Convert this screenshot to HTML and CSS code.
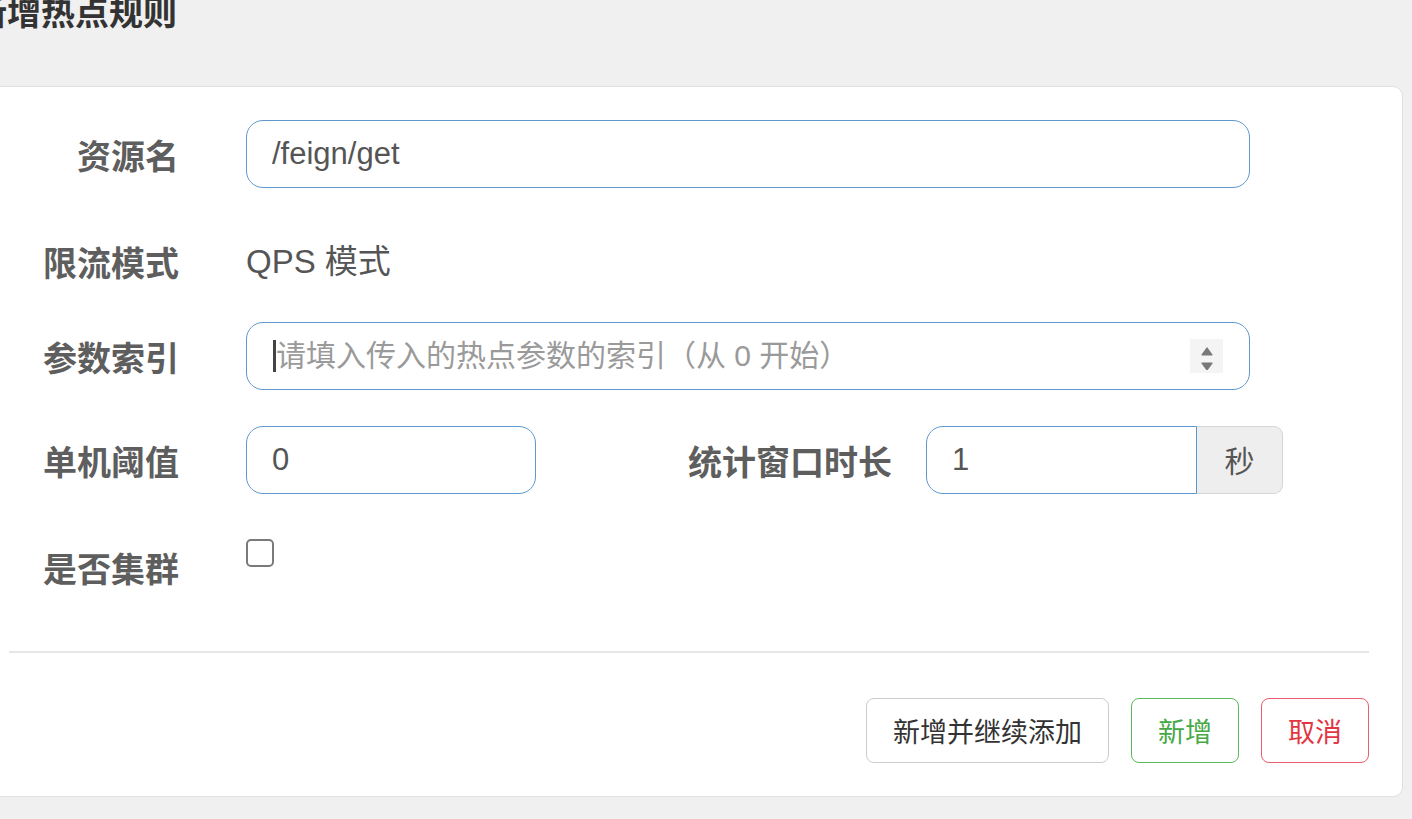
FILE: index.html
```html
<!DOCTYPE html>
<html lang="zh-CN">
<head>
    <meta charset="UTF-8">
    <meta name="viewport" content="width=device-width, initial-scale=1.0">
    <title>新增热点规则</title>
    <link rel="stylesheet" href="styles.css">
</head>
<body>

<div class="dialog">
    <div class="dialog-head">
        <h3 class="dialog-title">新增热点规则</h3>
        <span class="close">&times;</span>
    </div>

    <div class="card">
        <form class="rule-form">
            <div class="row">
                <label class="row-label">资源名</label>
                <input class="field field-wide" type="text" value="/feign/get">
            </div>

            <div class="row row-static">
                <label class="row-label">限流模式</label>
                <div class="static-text">QPS 模式</div>
            </div>

            <div class="row">
                <label class="row-label">参数索引</label>
                <div class="field field-wide number-box">
                    <span class="caret"></span>
                    <input class="number-input" type="text" placeholder="请填入传入的热点参数的索引（从 0 开始）">
                    <span class="spinner">
                        <svg width="16" height="28" viewBox="0 0 16 28">
                            <path d="M8 5 L13.5 12.5 Q14 13.5 13 13.5 L3 13.5 Q2 13.5 2.5 12.5 Z" fill="#787878"/>
                            <path d="M8 31 L13.5 23.5 Q14 22.5 13 22.5 L3 22.5 Q2 22.5 2.5 23.5 Z" transform="translate(0 -2)" fill="#787878"/>
                        </svg>
                    </span>
                </div>
            </div>

            <div class="row">
                <label class="row-label">单机阈值</label>
                <input class="field field-short" type="text" value="0">
                <label class="row-label row-label-mid">统计窗口时长</label>
                <div class="input-group">
                    <input class="field group-input" type="text" value="1">
                    <span class="addon">秒</span>
                </div>
            </div>

            <div class="row">
                <label class="row-label row-label-check">是否集群</label>
                <input class="check" type="checkbox">
            </div>
        </form>

        <div class="footer">
            <button class="btn btn-default" type="button">新增并继续添加</button>
            <button class="btn btn-success" type="button">新增</button>
            <button class="btn btn-danger" type="button">取消</button>
        </div>
    </div>
</div>

</body>
</html>
```

FILE: styles.css
```css
body {
    font-family: "Liberation Sans", "Noto Sans CJK SC", sans-serif;
    background-color: #f0f0f0;
    margin: 0;
    padding: 0;
    overflow: hidden;
}
.dialog {
    width: 1428px;
    margin-left: -25px;
}
.dialog-head {
    display: flex;
    justify-content: space-between;
    height: 28px;
}
.dialog-title {
    margin: -6px 0 0 -2px;
    font-family: "Noto Sans CJK SC", sans-serif;
    font-size: 34px;
    line-height: 34px;
    font-weight: bold;
    color: #333;
}
.close {
    font-size: 32px;
    line-height: 30px;
    margin-top: -27px;
    margin-right: -14px;
    color: #c0c0c0;
}
.card {
    margin-top: 58px;
    background-color: #fff;
    border: 1px solid #e0e0e0;
    border-radius: 10px;
    padding: 33px;
}
.row {
    display: flex;
    align-items: flex-start;
    margin-bottom: 36px;
}
.row:last-child {
    margin-bottom: 0;
}
.row-label {
    width: 170px;
    margin-right: 67px;
    padding-top: 15px;
    text-align: right;
    font-family: "Noto Sans CJK SC", sans-serif;
    font-size: 34px;
    line-height: 40px;
    font-weight: bold;
    color: #5e5e5e;
    flex-shrink: 0;
}
.row-static {
    margin-bottom: 33px;
}
.row-static .row-label {
    padding-top: 18px;
}
.row-label-mid {
    width: 356px;
    margin-right: 34px;
}
.row-label-check {
    padding-top: 18px;
}
.static-text {
    padding-top: 18px;
    padding-bottom: 7px;
    font-size: 33px;
    line-height: 40px;
    color: #555;
}
.field {
    box-sizing: border-box;
    height: 68px;
    padding: 0 25px;
    border: 1px solid #5f97cf;
    border-radius: 17px;
    background-color: #fff;
    font-family: "Liberation Sans", "Noto Sans CJK SC", sans-serif;
    font-size: 31px;
    color: #555;
    outline: none;
}
.field-wide { width: 1004px; }
.field-short { width: 290px; }
.number-box {
    display: flex;
    align-items: center;
    padding-left: 26px;
    padding-right: 26px;
}
.caret {
    width: 3px;
    height: 32px;
    background-color: #444;
}
.number-input {
    flex: 1;
    border: none;
    padding: 0;
    outline: none;
    font-family: "Liberation Sans", "Noto Sans CJK SC", sans-serif;
    font-size: 30px;
    color: #555;
}
.number-input::placeholder { color: #9a9a9a; }
.spinner {
    display: flex;
    align-items: center;
    justify-content: center;
    width: 33px;
    height: 34px;
    background-color: #f4f4f4;
}
.input-group {
    display: flex;
}
.group-input {
    width: 271px;
    border-radius: 17px 0 0 17px;
}
.addon {
    box-sizing: border-box;
    width: 86px;
    height: 68px;
    border: 1px solid #d5d5d5;
    border-left: none;
    border-radius: 0 9px 9px 0;
    background-color: #eee;
    text-align: center;
    font-family: "Noto Sans CJK SC", sans-serif;
    font-size: 30px;
    line-height: 64px;
    color: #555;
}
.check {
    appearance: none;
    box-sizing: border-box;
    width: 28px;
    height: 28px;
    margin: 9px 0 0 0;
    border: 2px solid #7a7a7a;
    border-radius: 5px;
    background-color: #fff;
}
.footer {
    margin-top: 63px;
    padding-top: 45px;
    border-top: 2px solid #e6e6e6;
    display: flex;
    justify-content: flex-end;
    gap: 22px;
}
.btn {
    height: 65px;
    padding: 0 26px;
    border: 1px solid #ccc;
    border-radius: 8px;
    background-color: #fff;
    font-family: "Noto Sans CJK SC", sans-serif;
    font-size: 27px;
    line-height: 36px;
    color: #333;
}
.btn-success {
    width: 108px;
    border-color: #5cb85c;
    color: #46a946;
}
.btn-danger {
    width: 108px;
    border-color: #e8606b;
    color: #e23644;
}
```
